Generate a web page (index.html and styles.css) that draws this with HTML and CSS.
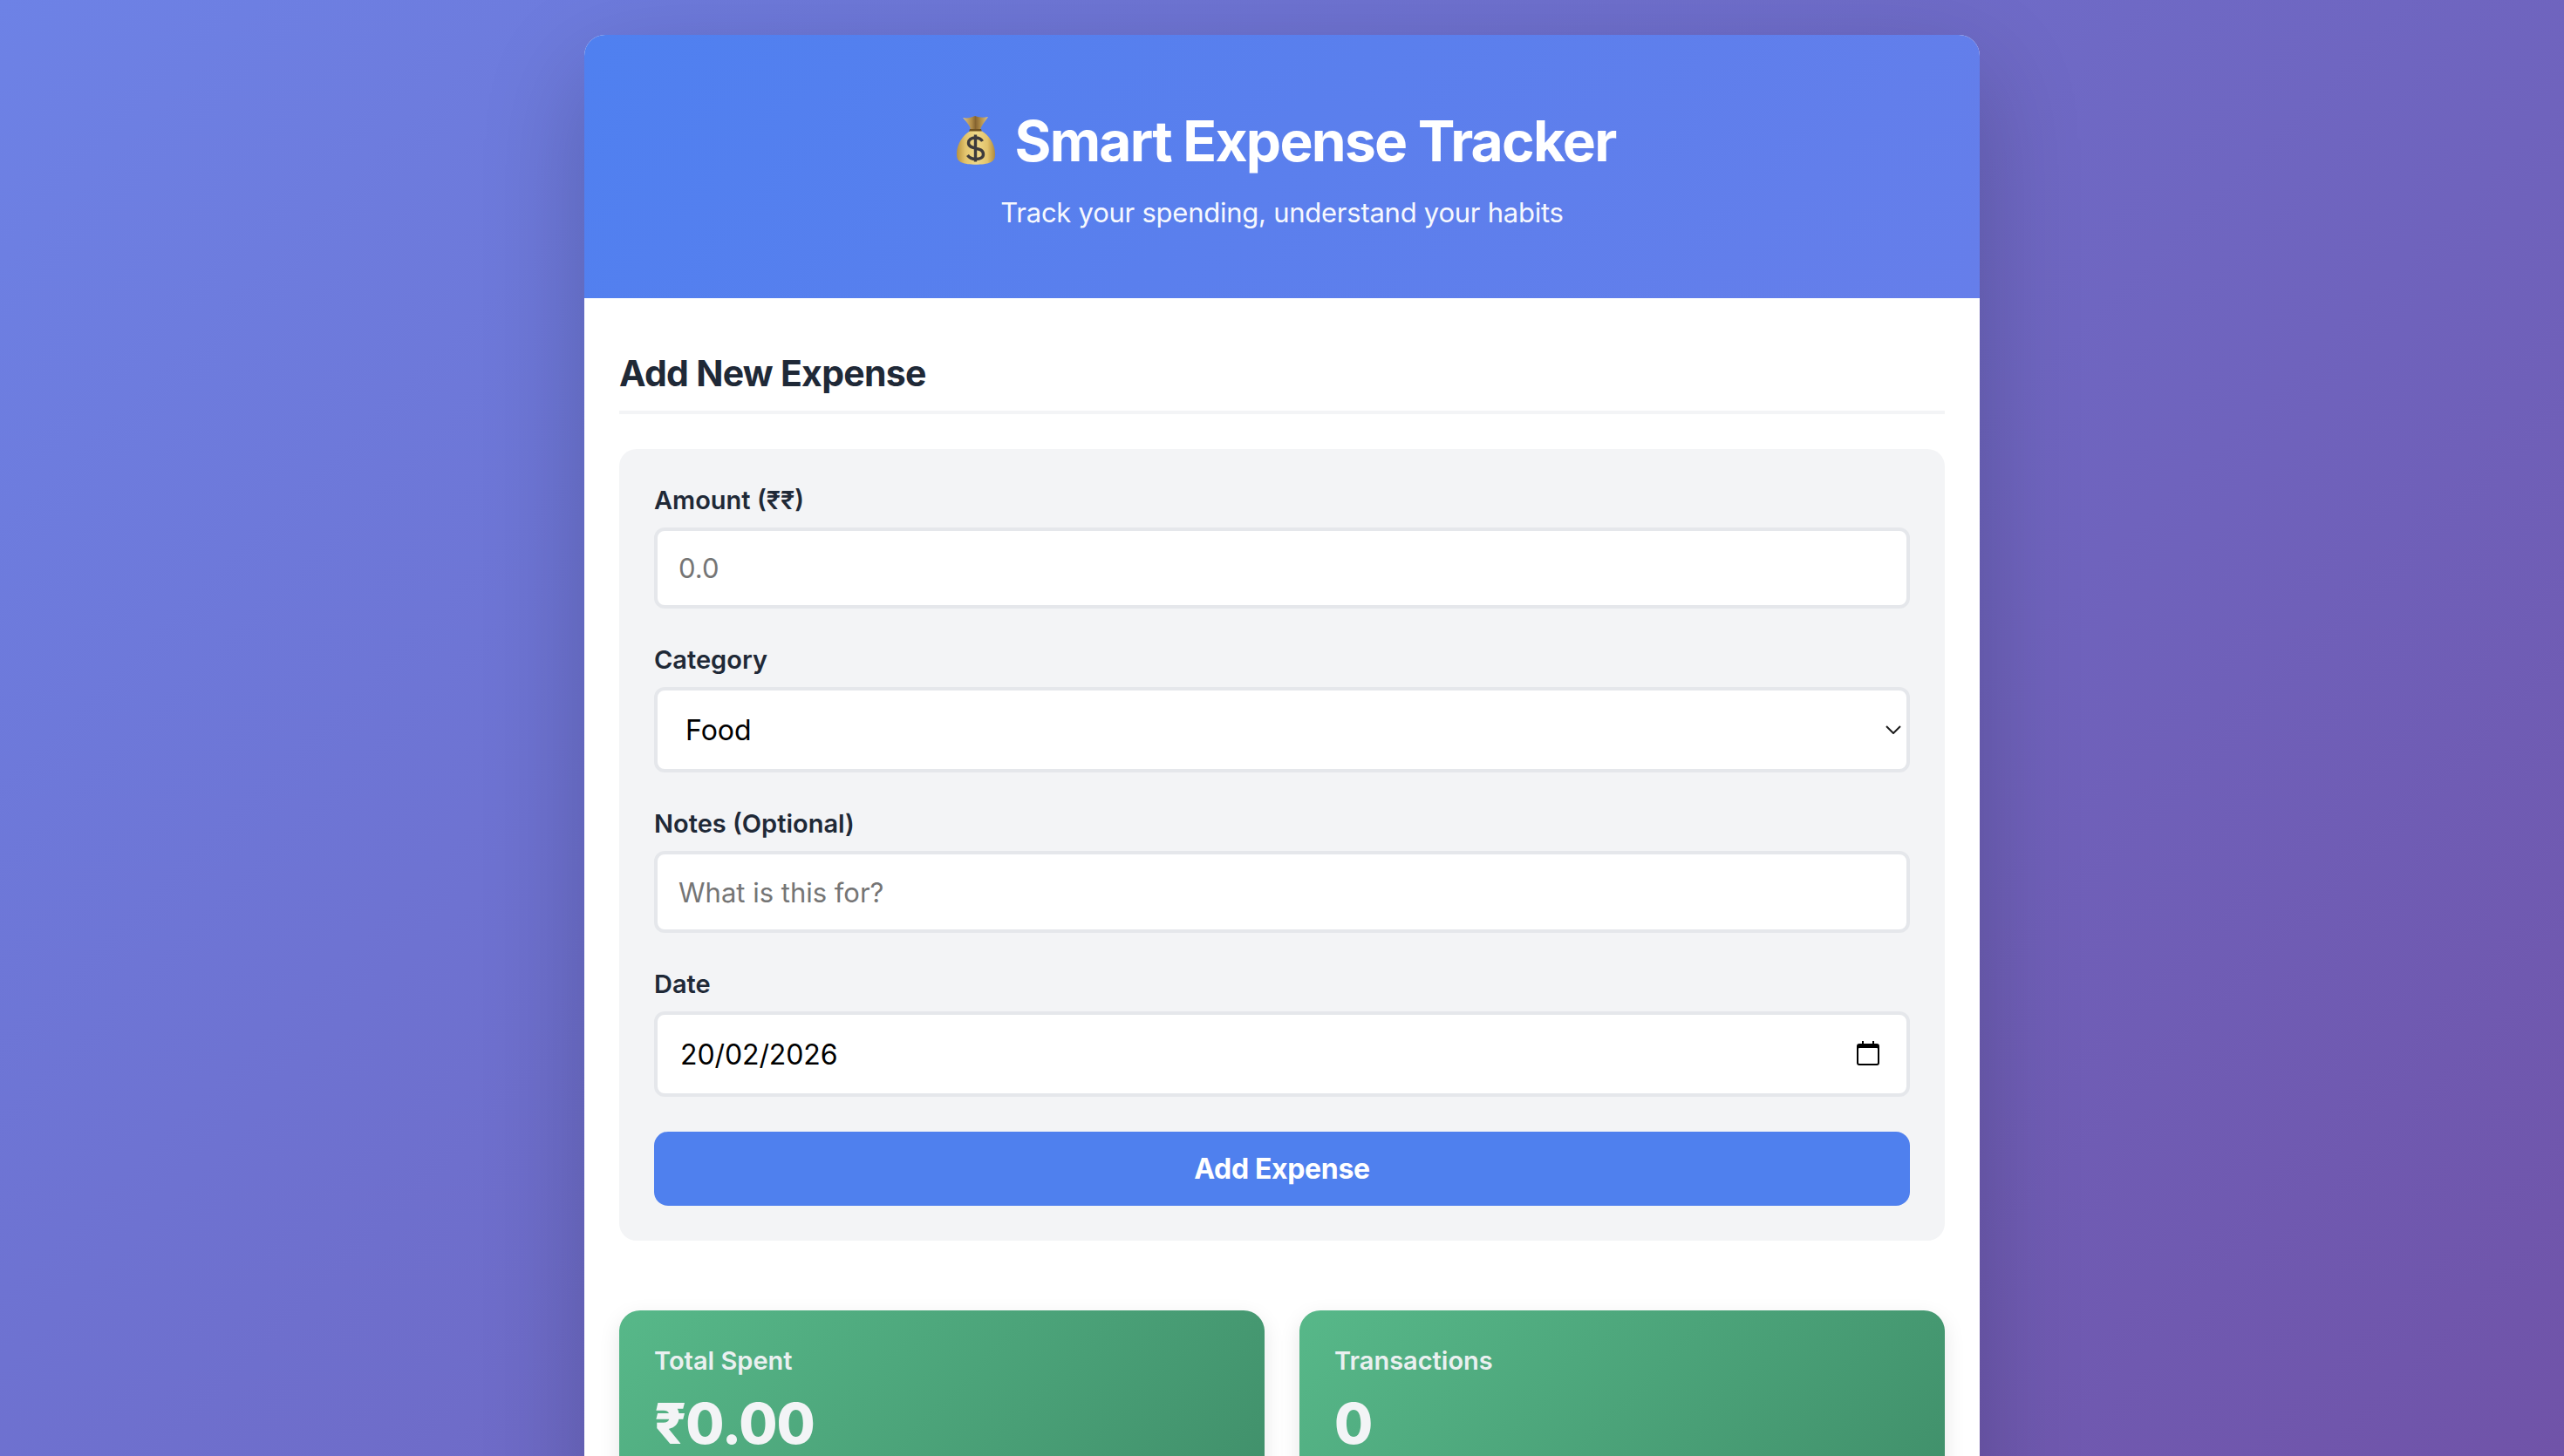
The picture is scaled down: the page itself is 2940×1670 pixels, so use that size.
FILE: index.html
```html
<!DOCTYPE html>
<html lang="en">
<head>
<meta charset="utf-8">
<title>Smart Expense Tracker</title>
<link rel="stylesheet" href="styles.css">
</head>
<body>
<main class="app">
  <header class="hero">
    <h1 class="hero-title">
      <svg class="bag" viewBox="0 0 44 57" aria-label="money bag" role="img">
        <defs>
          <linearGradient id="bagFill" x1="0" y1="0" x2="1" y2="0">
            <stop offset="0" stop-color="#b8923f"/>
            <stop offset=".22" stop-color="#e2c36c"/>
            <stop offset=".5" stop-color="#f0d98a"/>
            <stop offset=".8" stop-color="#e2c36c"/>
            <stop offset="1" stop-color="#b08a3c"/>
          </linearGradient>
          <linearGradient id="neckFill" x1="0" y1="0" x2="1" y2="0">
            <stop offset="0" stop-color="#dcc285"/>
            <stop offset=".35" stop-color="#b08c48"/>
            <stop offset=".5" stop-color="#866430"/>
            <stop offset=".7" stop-color="#b08c48"/>
            <stop offset="1" stop-color="#dcc285"/>
          </linearGradient>
        </defs>
        <path d="M7 3c5 1 9 0 14-2 5 2 10 2 15 1-2 4-7 8-9 15h-11c-1-6-6-10-9-14z" fill="url(#neckFill)"/>
        <path d="M15 16h13l1 3.500H14z" fill="#6f5120"/>
        <path d="M15 18.500c-7 4-15 14-15 26 0 5 1 8 6 10 6 3 26 3 32 0 5-2 6-5 6-10 0-12-8-22-15-26z" fill="url(#bagFill)"/>
        <path d="M29.500 30c-1.500-2.500-4-4-8-4-5 0-8 2.500-8 6 0 8.500 17 3.500 17 13 0 3.500-3.500 5.500-8.500 5.500-4.500 0-7.500-1.500-9.500-4.500M21.500 22.500v31" fill="none" stroke="#3d3a3c" stroke-width="3.400"/>
      </svg>
      <span class="hero-name">Smart Expense Tracker</span>
    </h1>
    <p class="hero-sub">Track your spending, understand your habits</p>
  </header>

  <section class="content">
    <h2 class="section-title">Add New Expense</h2>
    <form class="expense-form">
      <div class="field">
        <label class="field-label" for="amount">Amount (₹₹)</label>
        <input class="control" id="amount" type="text" placeholder="0.0">
      </div>
      <div class="field">
        <label class="field-label" for="category">Category</label>
        <div class="select-wrap">
          <select class="control control-select" id="category">
            <option>Food</option>
          </select>
          <svg class="chevron" viewBox="0 0 18 10" aria-hidden="true"><path d="M1 1l8 8 8-8" fill="none" stroke="#1b1b1b" stroke-width="2"/></svg>
        </div>
      </div>
      <div class="field">
        <label class="field-label" for="notes">Notes (Optional)</label>
        <input class="control control-notes" id="notes" type="text" placeholder="What is this for?">
      </div>
      <div class="field">
        <label class="field-label" for="date">Date</label>
        <div class="select-wrap">
          <input class="control control-date" id="date" type="text" value="20/02/2026">
          <svg class="calendar" viewBox="0 0 26 28" aria-hidden="true">
            <path d="M6 0h2v3h10V0h2v3h3a3 3 0 0 1 3 3v19a3 3 0 0 1-3 3H3a3 3 0 0 1-3-3V6a3 3 0 0 1 3-3h3z" fill="#000"/>
            <rect x="2" y="8" width="22" height="18" rx="1" fill="#fff"/>
          </svg>
        </div>
      </div>
      <button class="submit" type="button">Add Expense</button>
    </form>

    <div class="stats">
      <article class="stat">
        <h3 class="stat-label">Total Spent</h3>
        <p class="stat-value">₹0.00</p>
      </article>
      <article class="stat">
        <h3 class="stat-label">Transactions</h3>
        <p class="stat-value">0</p>
      </article>
    </div>
  </section>
</main>
</body>
</html>
```
FILE: styles.css
```css
* { box-sizing: border-box; }
html, body { margin: 0; }
body {
  height: 1670px;
  overflow: hidden;
  padding: 40px 0;
  font-family: Inter, "Noto Sans", sans-serif;
  background: linear-gradient(135deg, #6d82e6 0%, #7053a8 100%);
}
.app {
  width: 1600px;
  margin: 0 auto;
  background: #fff;
  border-radius: 24px;
  box-shadow: 0 40px 120px rgba(0, 0, 0, .2);
}
.hero {
  height: 302px;
  padding-top: 80px;
  text-align: center;
  color: #fff;
  border-radius: 24px 24px 0 0;
  background: linear-gradient(135deg, #4f80f0 0%, #667eea 100%);
}
.hero-title {
  display: flex;
  justify-content: center;
  align-items: center;
  gap: 22px;
  margin: 0;
  padding-left: 10px;
  height: 84px;
  font-size: 64px;
  line-height: 84px;
  font-weight: 700;
}
.hero-name { letter-spacing: -1.75px; }
.bag { width: 44px; height: 57px; margin-top: -4px; }
.hero-sub {
  margin: 16px 0 0;
  font-size: 31px;
  line-height: 48px;
  letter-spacing: -.25px;
  opacity: .95;
}
.content { padding: 40px; }
.section-title {
  height: 93px;
  margin: 0 0 40px;
  padding-top: 24px;
  border-bottom: 4px solid #f3f4f6;
  font-size: 41px;
  line-height: 44px;
  font-weight: 700;
  color: #1f2937;
  letter-spacing: -.73px;
}
.expense-form {
  padding: 40px;
  background: #f3f4f6;
  border-radius: 20px;
}
.field { margin-bottom: 40px; }
.field-label {
  display: block;
  margin-bottom: 16px;
  height: 34px;
  font-size: 29px;
  line-height: 38px;
  font-weight: 600;
  color: #1f2937;
}
.control {
  display: block;
  width: 100%;
  height: 93px;
  padding: 0 24px;
  border: 4px solid #e5e7eb;
  border-radius: 12px;
  background: #fff;
  font-family: Inter, "Noto Sans", sans-serif;
  font-size: 32px;
  color: #000;
  outline: none;
}
.control::placeholder {
  color: #757575;
  opacity: 1;
  font-size: 31px;
}
.select-wrap { position: relative; }
.control-select {
  height: 98px;
  padding-left: 32px;
  appearance: none;
}
.control-notes { height: 94px; }
.control-date {
  height: 98px;
  padding-left: 26px;
  letter-spacing: -.1px;
}
.chevron {
  position: absolute;
  top: 44px;
  right: 10px;
  width: 18px;
  height: 10px;
}
.calendar {
  position: absolute;
  top: 34px;
  right: 35px;
  width: 26px;
  height: 28px;
}
.submit {
  display: block;
  width: 100%;
  height: 85px;
  border: 0;
  border-radius: 16px;
  background: #4f80ee;
  color: #fff;
  font-family: Inter, "Noto Sans", sans-serif;
  font-size: 32px;
  font-weight: 700;
  letter-spacing: -.35px;
}
.stats {
  display: grid;
  grid-template-columns: 1fr 1fr;
  gap: 40px;
  margin-top: 80px;
}
.stat {
  height: 220px;
  padding: 40px;
  border-radius: 24px;
  color: #f3f4f6;
  background: linear-gradient(135deg, #57b889 0%, #408f6a 100%);
  box-shadow: 0 8px 24px rgba(0, 0, 0, .1);
}
.stat-label {
  margin: 0;
  font-size: 29px;
  line-height: 36px;
  font-weight: 600;
  opacity: .95;
}
.stat-value {
  margin: 16px 0 0;
  font-size: 64px;
  line-height: 76px;
  font-weight: 800;
  letter-spacing: -1px;
}
```
